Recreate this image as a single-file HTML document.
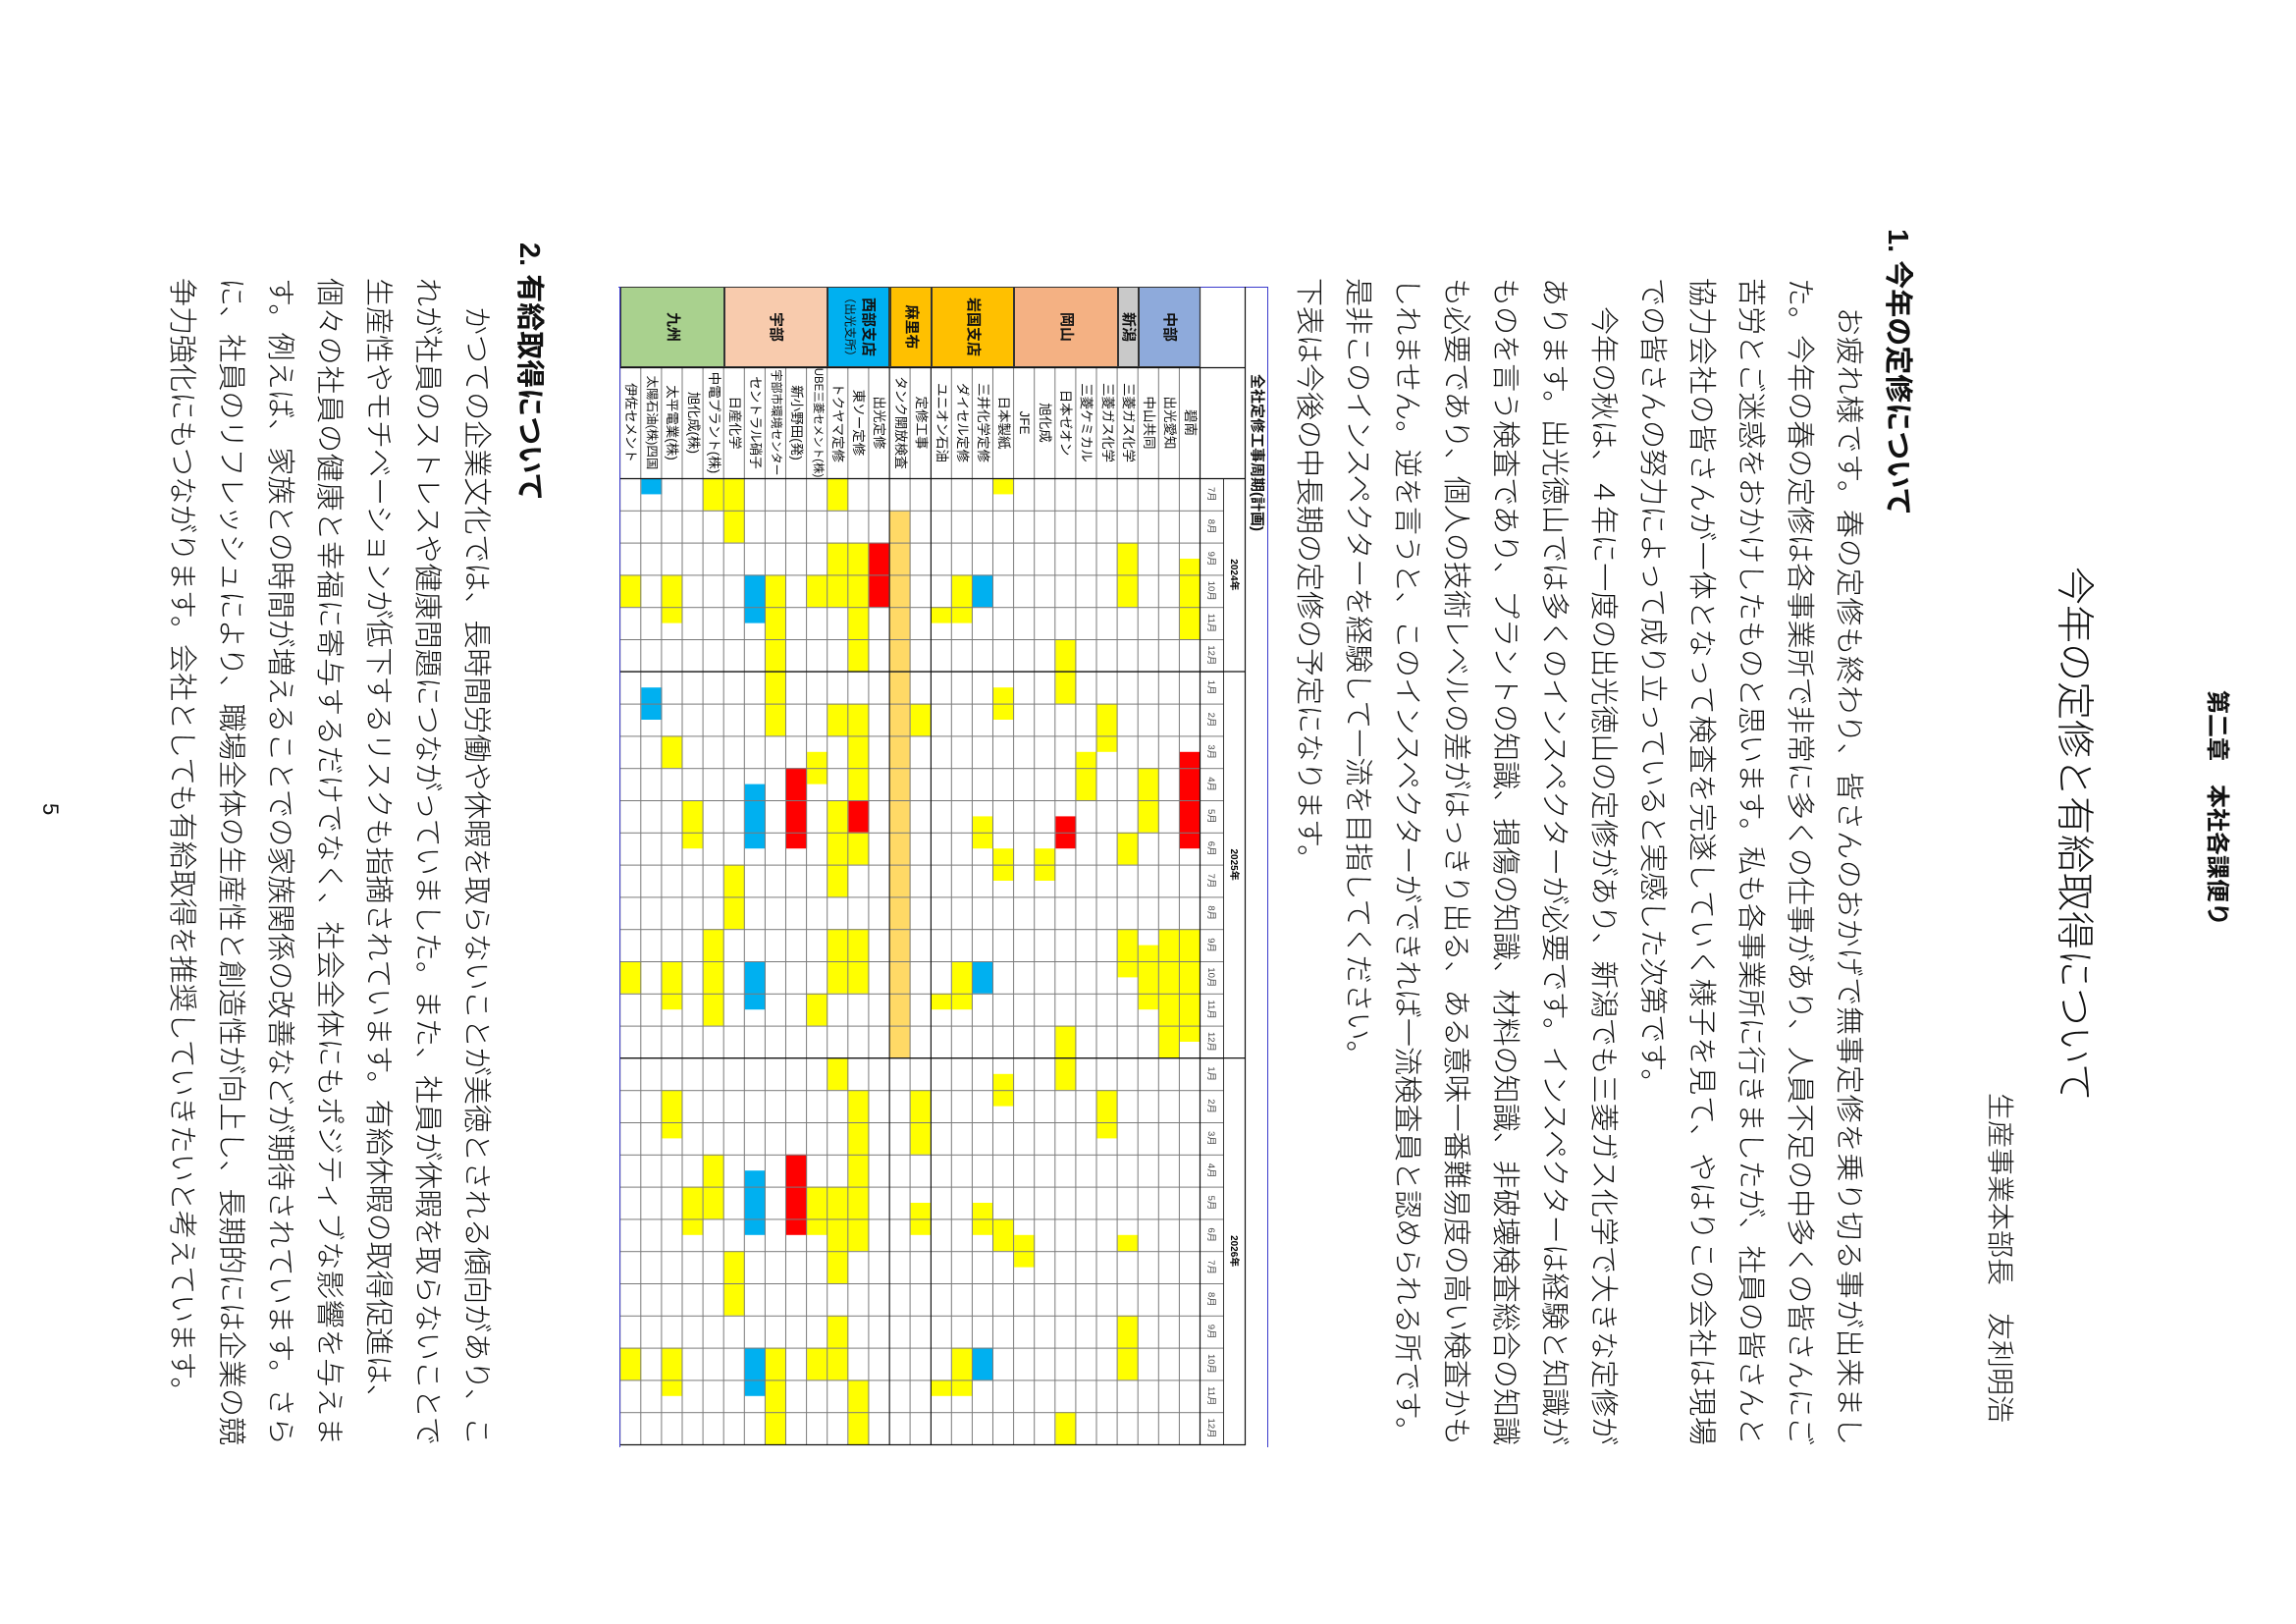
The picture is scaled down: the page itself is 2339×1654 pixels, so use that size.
<!DOCTYPE html>
<html><head><meta charset="utf-8">
<style>
html,body{margin:0;padding:0;background:#fff;}
body{width:2339px;height:1654px;overflow:hidden;position:relative;}
#pg{position:absolute;left:0;top:0;width:1654px;height:2339px;transform-origin:0 0;transform:translate(2339px,0) rotate(90deg);background:#fff;
font-family:"Liberation Sans","Noto Sans CJK JP",sans-serif;color:#111;}
.a{position:absolute;white-space:nowrap;}
.ln{position:absolute;left:283px;width:1189px;height:50px;line-height:50px;font-size:29px;white-space:nowrap;font-weight:300;}
.j{text-align:justify;text-align-last:justify;}
.h{position:absolute;font-size:29px;font-weight:bold;line-height:50px;white-space:nowrap;}
.rg{position:absolute;left:292px;width:82px;display:flex;align-items:center;justify-content:center;font-weight:bold;font-size:15px;text-align:center;line-height:18px;box-sizing:border-box;border:1px solid #333;}
.nm{position:absolute;left:374px;width:113px;height:21.1px;line-height:21px;font-size:13.5px;text-align:center;white-space:nowrap;overflow:hidden;}
</style></head><body>
<div id="pg">
<div class="a" style="left:703px;top:66px;font-size:24px;font-weight:bold;line-height:30px;">第二章　本社各課便り</div>
<div class="a" style="left:577px;top:203px;font-size:39px;line-height:48px;font-weight:300;">今年の定修と有給取得について</div>
<div class="a" style="left:1113px;top:284px;font-size:28px;line-height:36px;font-weight:300;">生産事業本部長　友利明浩</div>

<div class="h" style="left:233px;top:381px;">1. 今年の定修について</div>
<div class="ln j" style="top:431px;">　お疲れ様です。春の定修も終わり、皆さんのおかげで無事定修を乗り切る事が出来まし</div>
<div class="ln j" style="top:481px;">た。今年の春の定修は各事業所で非常に多くの仕事があり、人員不足の中多くの皆さんにご</div>
<div class="ln j" style="top:531px;">苦労とご迷惑をおかけしたものと思います。私も各事業所に行きましたが、社員の皆さんと</div>
<div class="ln j" style="top:581px;">協力会社の皆さんが一体となって検査を完遂していく様子を見て、やはりこの会社は現場</div>
<div class="ln" style="top:631px;">での皆さんの努力によって成り立っていると実感した次第です。</div>
<div class="ln j" style="top:681px;">　今年の秋は、４年に一度の出光徳山の定修があり、新潟でも三菱ガス化学で大きな定修が</div>
<div class="ln j" style="top:731px;">あります。出光徳山では多くのインスペクターが必要です。インスペクターは経験と知識が</div>
<div class="ln j" style="top:781px;">ものを言う検査であり、プラントの知識、損傷の知識、材料の知識、非破壊検査総合の知識</div>
<div class="ln j" style="top:831px;">も必要であり、個人の技術レベルの差がはっきり出る、ある意味一番難易度の高い検査かも</div>
<div class="ln j" style="top:881px;">しれません。逆を言うと、このインスペクターができれば一流検査員と認められる所です。</div>
<div class="ln" style="top:931px;">是非このインスペクターを経験して一流を目指してください。</div>
<div class="ln" style="top:981px;">下表は今後の中長期の定修の予定になります。</div>

<div class="a" style="left:381px;top:1048px;font-size:15px;font-weight:bold;line-height:22px;">全社定修工事周期(計画)</div>
<svg style="position:absolute;left:292px;top:1047px;" width="1182" height="662" viewBox="0 0 1182 662">
<defs>
<pattern id="vg" x="195" y="0" width="32.8" height="10" patternUnits="userSpaceOnUse"><rect x="0" y="0" width="1" height="10" fill="#7a7a7a"/></pattern>
<pattern id="hg" x="0" y="69" width="10" height="21.1" patternUnits="userSpaceOnUse"><rect x="0" y="0" width="10" height="1" fill="#7a7a7a"/></pattern>
</defs>
<line x1="0" y1="0.5" x2="1182" y2="0.5" stroke="#3a3acc" stroke-width="1"/>
<line x1="0.5" y1="0" x2="0.5" y2="662" stroke="#3a3acc" stroke-width="1"/>
<line x1="0" y1="660.5" x2="1182" y2="660.5" stroke="#3a3acc" stroke-width="1"/>
<rect x="0" y="69" width="82" height="63.3" fill="#8eaadb"/>
<rect x="0" y="132.3" width="82" height="21.1" fill="#c9c9c9"/>
<rect x="0" y="153.4" width="82" height="105.5" fill="#f4b183"/>
<rect x="0" y="258.9" width="82" height="84.4" fill="#ffc000"/>
<rect x="0" y="343.3" width="82" height="42.2" fill="#ffc000"/>
<rect x="0" y="385.5" width="82" height="63.3" fill="#00b0f0"/>
<rect x="0" y="448.8" width="82" height="105.5" fill="#f8cbad"/>
<rect x="0" y="554.3" width="82" height="105.5" fill="#a9d18e"/>
<g transform="translate(0,69)"><rect x="277" width="82" height="21.1" fill="#ff0"/><rect x="473.8" width="98.4" height="21.1" fill="#f00"/><rect x="654.2" width="114.8" height="21.1" fill="#ff0"/></g>
<g transform="translate(0,90.1)"><rect x="654.2" width="131.2" height="21.1" fill="#ff0"/></g>
<g transform="translate(0,111.2)"><rect x="490.2" width="65.6" height="21.1" fill="#ff0"/><rect x="670.6" width="65.6" height="21.1" fill="#ff0"/></g>
<g transform="translate(0,132.3)"><rect x="260.6" width="65.6" height="21.1" fill="#ff0"/><rect x="555.8" width="32.8" height="21.1" fill="#ff0"/><rect x="654.2" width="49.2" height="21.1" fill="#ff0"/><rect x="965.8" width="16.4" height="21.1" fill="#ff0"/><rect x="1047.8" width="65.6" height="21.1" fill="#ff0"/></g>
<g transform="translate(0,153.4)"><rect x="424.6" width="49.2" height="21.1" fill="#ff0"/><rect x="818.2" width="49.2" height="21.1" fill="#ff0"/></g>
<g transform="translate(0,174.5)"><rect x="473.8" width="49.2" height="21.1" fill="#ff0"/></g>
<g transform="translate(0,195.6)"><rect x="359" width="65.6" height="21.1" fill="#ff0"/><rect x="539.4" width="32.8" height="21.1" fill="#f00"/><rect x="752.6" width="65.6" height="21.1" fill="#ff0"/><rect x="1146.2" width="32.8" height="21.1" fill="#ff0"/></g>
<g transform="translate(0,216.7)"><rect x="572.2" width="32.8" height="21.1" fill="#ff0"/></g>
<g transform="translate(0,237.8)"><rect x="965.8" width="32.8" height="21.1" fill="#ff0"/></g>
<g transform="translate(0,258.9)"><rect x="195" width="16.4" height="21.1" fill="#ff0"/><rect x="408.2" width="32.8" height="21.1" fill="#ff0"/><rect x="572.2" width="32.8" height="21.1" fill="#ff0"/><rect x="801.8" width="32.8" height="21.1" fill="#ff0"/><rect x="949.4" width="32.8" height="21.1" fill="#ff0"/></g>
<g transform="translate(0,280)"><rect x="293.4" width="32.8" height="21.1" fill="#00b0f0"/><rect x="539.4" width="32.8" height="21.1" fill="#ff0"/><rect x="687" width="32.8" height="21.1" fill="#00b0f0"/><rect x="933" width="32.8" height="21.1" fill="#ff0"/><rect x="1080.6" width="32.8" height="21.1" fill="#00b0f0"/></g>
<g transform="translate(0,301.1)"><rect x="293.4" width="49.2" height="21.1" fill="#ff0"/><rect x="687" width="49.2" height="21.1" fill="#ff0"/><rect x="1080.6" width="49.2" height="21.1" fill="#ff0"/></g>
<g transform="translate(0,322.2)"><rect x="326.2" width="16.4" height="21.1" fill="#ff0"/><rect x="719.8" width="16.4" height="21.1" fill="#ff0"/><rect x="1113.4" width="16.4" height="21.1" fill="#ff0"/></g>
<g transform="translate(0,343.3)"><rect x="424.6" width="32.8" height="21.1" fill="#ff0"/><rect x="818.2" width="65.6" height="21.1" fill="#ff0"/><rect x="933" width="32.8" height="21.1" fill="#ff0"/></g>
<g transform="translate(0,364.4)"><rect x="227.8" width="557.6" height="21.1" fill="#ffd966"/></g>
<g transform="translate(0,385.5)"><rect x="260.6" width="65.6" height="21.1" fill="#f00"/></g>
<g transform="translate(0,406.6)"><rect x="260.6" width="131.2" height="21.1" fill="#ff0"/><rect x="424.6" width="98.4" height="21.1" fill="#ff0"/><rect x="523" width="32.8" height="21.1" fill="#f00"/><rect x="555.8" width="32.8" height="21.1" fill="#ff0"/><rect x="654.2" width="65.6" height="21.1" fill="#ff0"/><rect x="818.2" width="164" height="21.1" fill="#ff0"/><rect x="1113.4" width="65.6" height="21.1" fill="#ff0"/></g>
<g transform="translate(0,427.7)"><rect x="195" width="32.8" height="21.1" fill="#ff0"/><rect x="260.6" width="65.6" height="21.1" fill="#ff0"/><rect x="424.6" width="32.8" height="21.1" fill="#ff0"/><rect x="523" width="98.4" height="21.1" fill="#ff0"/><rect x="654.2" width="65.6" height="21.1" fill="#ff0"/><rect x="785.4" width="32.8" height="21.1" fill="#ff0"/><rect x="916.6" width="98.4" height="21.1" fill="#ff0"/><rect x="1047.8" width="65.6" height="21.1" fill="#ff0"/></g>
<g transform="translate(0,448.8)"><rect x="293.4" width="32.8" height="21.1" fill="#ff0"/><rect x="473.8" width="32.8" height="21.1" fill="#ff0"/><rect x="719.8" width="32.8" height="21.1" fill="#ff0"/><rect x="916.6" width="49.2" height="21.1" fill="#ff0"/><rect x="1080.6" width="32.8" height="21.1" fill="#ff0"/></g>
<g transform="translate(0,469.9)"><rect x="490.2" width="82" height="21.1" fill="#f00"/><rect x="883.8" width="82" height="21.1" fill="#f00"/></g>
<g transform="translate(0,491)"><rect x="293.4" width="164" height="21.1" fill="#ff0"/><rect x="1080.6" width="98.4" height="21.1" fill="#ff0"/></g>
<g transform="translate(0,512.1)"><rect x="293.4" width="49.2" height="21.1" fill="#00b0f0"/><rect x="506.6" width="65.6" height="21.1" fill="#00b0f0"/><rect x="687" width="49.2" height="21.1" fill="#00b0f0"/><rect x="900.2" width="65.6" height="21.1" fill="#00b0f0"/><rect x="1080.6" width="49.2" height="21.1" fill="#00b0f0"/></g>
<g transform="translate(0,533.2)"><rect x="195" width="65.6" height="21.1" fill="#ff0"/><rect x="588.6" width="65.6" height="21.1" fill="#ff0"/><rect x="982.2" width="65.6" height="21.1" fill="#ff0"/></g>
<g transform="translate(0,554.3)"><rect x="195" width="32.8" height="21.1" fill="#ff0"/><rect x="654.2" width="98.4" height="21.1" fill="#ff0"/><rect x="883.8" width="65.6" height="21.1" fill="#ff0"/></g>
<g transform="translate(0,575.4)"><rect x="523" width="49.2" height="21.1" fill="#ff0"/><rect x="916.6" width="49.2" height="21.1" fill="#ff0"/></g>
<g transform="translate(0,596.5)"><rect x="293.4" width="49.2" height="21.1" fill="#ff0"/><rect x="457.4" width="32.8" height="21.1" fill="#ff0"/><rect x="687" width="49.2" height="21.1" fill="#ff0"/><rect x="818.2" width="49.2" height="21.1" fill="#ff0"/><rect x="1080.6" width="49.2" height="21.1" fill="#ff0"/></g>
<g transform="translate(0,617.6)"><rect x="195" width="16.4" height="21.1" fill="#00b0f0"/><rect x="408.2" width="32.8" height="21.1" fill="#00b0f0"/></g>
<g transform="translate(0,638.7)"><rect x="293.4" width="32.8" height="21.1" fill="#ff0"/><rect x="687" width="32.8" height="21.1" fill="#ff0"/><rect x="1080.6" width="32.8" height="21.1" fill="#ff0"/></g>
<rect x="195" y="45" width="984.5" height="615" fill="url(#vg)"/>
<rect x="82" y="69" width="1097.5" height="591" fill="url(#hg)"/>
<line x1="0" y1="23.5" x2="1180" y2="23.5" stroke="#111" stroke-width="1.2"/>
<line x1="195" y1="45.5" x2="1180" y2="45.5" stroke="#333" stroke-width="1"/>
<line x1="0" y1="69.5" x2="1180" y2="69.5" stroke="#111" stroke-width="1.2"/>
<line x1="82.5" y1="23" x2="82.5" y2="660" stroke="#111" stroke-width="1.2"/>
<line x1="195.5" y1="23" x2="195.5" y2="660" stroke="#111" stroke-width="1.2"/>
<line x1="392" y1="23" x2="392" y2="660" stroke="#111" stroke-width="1.2"/>
<line x1="785.6" y1="23" x2="785.6" y2="660" stroke="#111" stroke-width="1.2"/>
<line x1="1179.5" y1="23" x2="1179.5" y2="660" stroke="#111" stroke-width="1.2"/>
<line x1="0" y1="343.5" x2="1180" y2="343.5" stroke="#111" stroke-width="1"/>
<line x1="0" y1="385.8" x2="1180" y2="385.8" stroke="#111" stroke-width="1"/>
<g font-family="Liberation Sans, Noto Sans CJK JP, sans-serif" font-size="10" text-anchor="middle">
<text x="293.4" y="38" font-weight="bold">2024年</text>
<text x="588.6" y="38" font-weight="bold">2025年</text>
<text x="982.2" y="38" font-weight="bold">2026年</text>
<g fill="#444" font-size="9.5">
<text x="211.4" y="61">7月</text><text x="244.2" y="61">8月</text><text x="277" y="61">9月</text><text x="309.8" y="61">10月</text><text x="342.6" y="61">11月</text><text x="375.4" y="61">12月</text>
<text x="408.2" y="61">1月</text><text x="441" y="61">2月</text><text x="473.8" y="61">3月</text><text x="506.6" y="61">4月</text><text x="539.4" y="61">5月</text><text x="572.2" y="61">6月</text><text x="605" y="61">7月</text><text x="637.8" y="61">8月</text><text x="670.6" y="61">9月</text><text x="703.4" y="61">10月</text><text x="736.2" y="61">11月</text><text x="769" y="61">12月</text>
<text x="801.8" y="61">1月</text><text x="834.6" y="61">2月</text><text x="867.4" y="61">3月</text><text x="900.2" y="61">4月</text><text x="933" y="61">5月</text><text x="965.8" y="61">6月</text><text x="998.6" y="61">7月</text><text x="1031.4" y="61">8月</text><text x="1064.2" y="61">9月</text><text x="1097" y="61">10月</text><text x="1129.8" y="61">11月</text><text x="1162.6" y="61">12月</text>
</g></g>
</svg>
<div class="rg" style="top:1116px;height:63.3px;">中部</div>
<div class="rg" style="top:1179.3px;height:21.1px;">新潟</div>
<div class="rg" style="top:1200.4px;height:105.5px;">岡山</div>
<div class="rg" style="top:1305.9px;height:84.4px;">岩国支店</div>
<div class="rg" style="top:1390.3px;height:42.2px;">麻里布</div>
<div class="rg" style="top:1432.5px;height:63.3px;"><div>西部支店<br><span style="font-size:12px;font-weight:normal;">（出光支所）</span></div></div>
<div class="rg" style="top:1495.8px;height:105.5px;">宇部</div>
<div class="rg" style="top:1601.3px;height:105.5px;">九州</div>
<div class="nm" style="top:1116px;">碧南</div>
<div class="nm" style="top:1137.1px;">出光愛知</div>
<div class="nm" style="top:1158.2px;">中山共同</div>
<div class="nm" style="top:1179.3px;">三菱ガス化学</div>
<div class="nm" style="top:1200.4px;">三菱ガス化学</div>
<div class="nm" style="top:1221.5px;">三菱ケミカル</div>
<div class="nm" style="top:1242.6px;">日本ゼオン</div>
<div class="nm" style="top:1263.7px;">旭化成</div>
<div class="nm" style="top:1284.8px;">JFE</div>
<div class="nm" style="top:1305.9px;">日本製紙</div>
<div class="nm" style="top:1327px;">三井化学定修</div>
<div class="nm" style="top:1348.1px;">ダイセル定修</div>
<div class="nm" style="top:1369.2px;">ユニオン石油</div>
<div class="nm" style="top:1390.3px;">定修工事</div>
<div class="nm" style="top:1411.4px;">タンク開放検査</div>
<div class="nm" style="top:1432.5px;">出光定修</div>
<div class="nm" style="top:1453.6px;">東ソー定修</div>
<div class="nm" style="top:1474.7px;">トクヤマ定修</div>
<div class="nm" style="top:1495.8px;font-size:11.5px;">UBE三菱セメント(株)</div>
<div class="nm" style="top:1516.9px;">新小野田(発)</div>
<div class="nm" style="top:1538px;font-size:12px;">宇部市環境センター</div>
<div class="nm" style="top:1559.1px;">セントラル硝子</div>
<div class="nm" style="top:1580.2px;">日産化学</div>
<div class="nm" style="top:1601.3px;">中電プラント(株)</div>
<div class="nm" style="top:1622.4px;">旭化成(株)</div>
<div class="nm" style="top:1643.5px;">太平電業(株)</div>
<div class="nm" style="top:1664.6px;font-size:12.5px;">太陽石油(株)四国</div>
<div class="nm" style="top:1685.7px;">伊佐セメント</div>

<div class="h" style="left:247px;top:1775px;">2. 有給取得について</div>
<div class="ln j" style="top:1829px;">　かつての企業文化では、長時間労働や休暇を取らないことが美徳とされる傾向があり、こ</div>
<div class="ln j" style="top:1879px;">れが社員のストレスや健康問題につながっていました。また、社員が休暇を取らないことで</div>
<div class="ln" style="top:1929px;">生産性やモチベーションが低下するリスクも指摘されています。有給休暇の取得促進は、</div>
<div class="ln j" style="top:1979px;">個々の社員の健康と幸福に寄与するだけでなく、社会全体にもポジティブな影響を与えま</div>
<div class="ln j" style="top:2029px;">す。例えば、家族との時間が増えることでの家族関係の改善などが期待されています。さら</div>
<div class="ln j" style="top:2079px;">に、社員のリフレッシュにより、職場全体の生産性と創造性が向上し、長期的には企業の競</div>
<div class="ln" style="top:2129px;">争力強化にもつながります。会社としても有給取得を推奨していきたいと考えています。</div>

<div class="a" style="left:818px;top:2276px;font-size:22px;line-height:24px;">5</div>
</div>
</body></html>
